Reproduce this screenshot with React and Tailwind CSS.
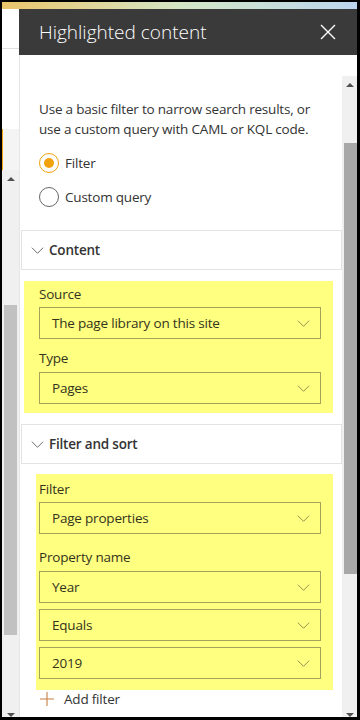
import React from 'react';

function Chevron({ className }) {
  return (
    <svg viewBox="0 0 14 8" className={className} fill="none" stroke="currentColor" strokeWidth="1.1">
      <path d="M0.6 0.8 L7 7.2 L13.4 0.8" />
    </svg>
  );
}

function Dropdown({ value }) {
  return (
    <div className="flex h-[32px] items-center justify-between border border-[#a3a35c] pl-[12px] pr-[10px] text-[13.5px] tracking-[-0.2px] text-[#34341c]">
      <span>{value}</span>
      <Chevron className="h-[7px] w-[13px] text-[#8c8c52]" />
    </div>
  );
}

function Label({ children, className = '' }) {
  return (
    <div className={`h-[20px] text-[13.5px] leading-[20px] tracking-[-0.2px] text-[#34341c] ${className}`}>{children}</div>
  );
}

function SectionHeader({ title }) {
  return (
    <div className="ml-px flex h-[40px] items-center gap-[5px] border border-[#e3e3e3] bg-white pl-[9px]">
      <Chevron className="h-[7px] w-[13px] text-[#666666]" />
      <span className="text-[13.5px] font-semibold tracking-[-0.2px] text-[#333333]">{title}</span>
    </div>
  );
}

function Radio({ label, checked }) {
  return (
    <div className="flex h-[20px] items-center gap-[6px]">
      <div
        className={`flex h-[20px] w-[20px] items-center justify-center rounded-full border ${
          checked ? 'border-[#f2a20c]' : 'border-[#666666]'
        }`}
      >
        {checked && <div className="h-[10px] w-[10px] rounded-full bg-[#f2a20c]" />}
      </div>
      <span className="text-[13.5px] tracking-[-0.2px] text-[#333333]">{label}</span>
    </div>
  );
}

export default function App() {
  return (
    <div className="h-[720px] w-[360px] overflow-hidden border-b-[3px] border-l-2 border-r-[3px] border-t-2 border-black bg-white font-['Open_Sans',sans-serif]">
      {/* blurred page behind */}
      <div className="h-[7px] bg-gradient-to-r from-[#eac46a] via-[#d3e6c4] to-[#bcd5ef]" />

      <div className="flex h-[708px]">
        {/* left strip of the page behind the panel */}
        <div className="flex w-[17px] flex-col">
          <div className="h-[40px] border-b border-[#e1e1e1] bg-white" />
          <div className="h-[80px] bg-white" />
          <div className="h-[41px] border-l border-[#f0a40f] bg-[#f4f4f4]" />
          <div className="flex flex-1 flex-col bg-[#f0f0f0]">
            <div className="flex h-[17px] items-center justify-center">
              <div className="h-0 w-0 border-x-[4px] border-b-[4px] border-x-transparent border-b-[#505050]" />
            </div>
            <div className="h-[118px]" />
            <div className="ml-[2px] h-[330px] w-[13px] bg-[#c1c1c1]" />
            <div className="flex-1" />
            <div className="flex h-[6px] items-end justify-center">
              <div className="h-0 w-0 border-x-[4px] border-t-[4px] border-x-transparent border-t-[#505050]" />
            </div>
          </div>
        </div>

        {/* panel */}
        <div className="flex flex-1 flex-col">
          <div className="flex h-[46px] items-center justify-between bg-[#3a3a3a] pl-[20px] pr-[21px]">
            <span className="text-[19px] font-light text-white">Highlighted content</span>
            <svg viewBox="0 0 16 16" className="h-[16px] w-[16px]" fill="none" stroke="#ffffff" strokeWidth="1.4">
              <path d="M1 1 L15 15 M15 1 L1 15" />
            </svg>
          </div>

          <div className="flex flex-1 border-l border-[#e6e6e6]">
            <div className="flex-1">
              <div className="pl-[19px] pr-[10px] pt-[44px] text-[13.5px] leading-[20px] tracking-[-0.2px] text-[#333333]">
                Use a basic filter to narrow search results, or use a custom query with CAML or KQL code.
              </div>

              <div className="flex flex-col gap-[14px] px-[19px] pt-[14px]">
                <Radio label="Filter" checked />
                <Radio label="Custom query" />
              </div>

              <div className="mt-[23px]">
                <SectionHeader title="Content" />
              </div>

              <div className="ml-[4px] mr-[9px] mt-[11px] bg-[#ffff80] pb-[9px] pl-[15px] pr-[12px] pt-[3px]">
                <Label>Source</Label>
                <div className="mt-[3px]">
                  <Dropdown value="The page library on this site" />
                </div>
                <Label className="mt-[9px]">Type</Label>
                <div className="mt-[4px]">
                  <Dropdown value="Pages" />
                </div>
              </div>

              <div className="mt-[11px]">
                <SectionHeader title="Filter and sort" />
              </div>

              <div className="ml-[16px] mr-[9px] mt-[10px] bg-[#ffff80] pb-[11px] pl-[3px] pr-[12px] pt-[5px]">
                <Label>Filter</Label>
                <div className="mt-[3px]">
                  <Dropdown value="Page properties" />
                </div>
                <Label className="mt-[13px]">Property name</Label>
                <div className="mt-[4px] flex flex-col gap-[6px]">
                  <Dropdown value="Year" />
                  <Dropdown value="Equals" />
                  <Dropdown value="2019" />
                </div>
              </div>

              <div className="flex h-[18px] items-center gap-[10px] pl-[20px]">
                <svg viewBox="0 0 14 14" className="h-[14px] w-[14px]" fill="none" stroke="#c98041" strokeWidth="1.1">
                  <path d="M7 0 L7 14 M0 7 L14 7" />
                </svg>
                <span className="text-[13.5px] tracking-[-0.2px] text-[#333333]">Add filter</span>
              </div>
            </div>

            {/* right scrollbar */}
            <div className="flex w-[15px] flex-col pt-[21px]">
              <div className="flex flex-1 flex-col bg-[#f0f0f0]">
                <div className="flex h-[17px] items-center justify-center">
                  <div className="h-0 w-0 border-x-[4px] border-b-[4px] border-x-transparent border-b-[#505050]" />
                </div>
                <div className="h-[50px]" />
                <div className="ml-[2px] h-[431px] w-[13px] bg-[#a8a8a8]" />
                <div className="flex-1" />
                <div className="flex h-[6px] items-end justify-center">
                  <div className="h-0 w-0 border-x-[4px] border-t-[4px] border-x-transparent border-t-[#505050]" />
                </div>
              </div>
            </div>
          </div>
        </div>
      </div>
    </div>
  );
}
